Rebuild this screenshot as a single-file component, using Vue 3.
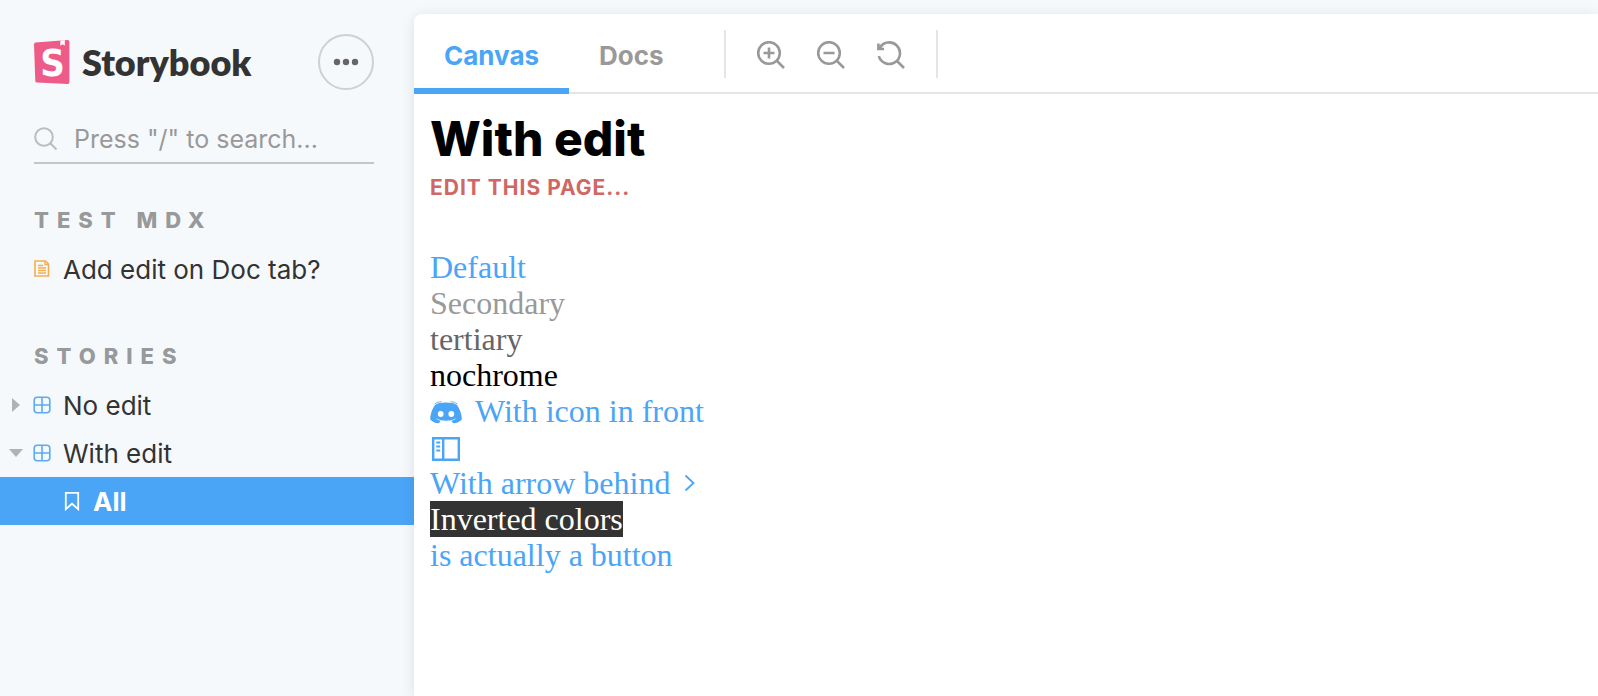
<script setup>
import { ref } from 'vue'

const query = ref('')
const activeTab = ref('Canvas')
const tabs = ['Canvas', 'Docs']
</script>

<template>
  <div class="layout">
    <aside class="sidebar">
      <header class="brand">
        <a class="logo" href="#" aria-label="Storybook">
          <svg class="logo-mark" viewBox="0 0 36 44" aria-hidden="true">
            <path d="M1.6 2.4 33.6 0Q35.4 0 35.4 1.8V42.2Q35.4 44 33.6 43.9L3 42.6Q1.4 42.5 1.3 40.9L0 4.2Q0 2.5 1.6 2.4Z" fill="#ee5b89" />
            <path d="M26.4.6 30.8.2V5.8L28.7 4.2 26.2 5.8Z" fill="#fff" />
            <text class="logo-letter" x="18.5" y="35.5" text-anchor="middle">S</text>
          </svg>
          <span class="logo-text">Storybook</span>
        </a>
        <button class="more" type="button" aria-label="Shortcuts">
          <svg viewBox="0 0 26 8" aria-hidden="true">
            <circle cx="4" cy="4" r="3.2" /><circle cx="13" cy="4" r="3.2" /><circle cx="22" cy="4" r="3.2" />
          </svg>
        </button>
      </header>

      <form class="search" role="search" @submit.prevent>
        <svg viewBox="0 0 24 24" aria-hidden="true">
          <circle cx="10" cy="10" r="8.8" /><path d="m16.3 16.3 6.2 6.2" />
        </svg>
        <input v-model="query" type="text" aria-label="Search" placeholder="Press &quot;/&quot; to search..." />
      </form>

      <nav>
        <section class="group">
          <h2>TEST MDX</h2>
          <a class="row" href="#">
            <span class="caret"></span>
            <svg class="icon doc" viewBox="0 0 18 18" aria-hidden="true">
              <path d="M2 1H12.5L15.5 4V16H2Z" /><path d="M12 1V4.500H15.500M5 5.500H10M5 8H13M5 10.500H13M5 13H13" class="thin" />
            </svg>
            <span>Add edit on Doc tab?</span>
          </a>
        </section>
        <section class="group">
          <h2>STORIES</h2>
          <a class="row" href="#">
            <svg class="caret" viewBox="0 0 16 16" aria-hidden="true"><path d="M4 1 12 8 4 15Z" /></svg>
            <svg class="icon component" viewBox="0 0 18 18" aria-hidden="true">
              <rect x="1.2" y="1.2" width="15.6" height="15.6" rx="3" /><path d="M9 1.2V16.8M1.2 9H16.8" />
            </svg>
            <span>No edit</span>
          </a>
          <a class="row" href="#">
            <svg class="caret" viewBox="0 0 16 16" aria-hidden="true"><path d="M1 4H15L8 12Z" /></svg>
            <svg class="icon component" viewBox="0 0 18 18" aria-hidden="true">
              <rect x="1.2" y="1.2" width="15.6" height="15.6" rx="3" /><path d="M9 1.2V16.8M1.2 9H16.8" />
            </svg>
            <span>With edit</span>
          </a>
          <a class="row selected" href="#" aria-current="page">
            <svg class="icon bookmark" viewBox="0 0 18 20" aria-hidden="true">
              <path d="M2.8 1.8H15.2V18.2L9 12.800 2.8 18.2Z" />
            </svg>
            <span>All</span>
          </a>
        </section>
      </nav>
    </aside>

    <main class="panel">
      <div class="toolbar">
        <button
          v-for="tab in tabs"
          :key="tab"
          type="button"
          class="tab"
          :class="{ active: tab === activeTab }"
          @click="activeTab = tab"
        >{{ tab }}</button>
        <div class="tools">
          <button type="button" aria-label="Zoom in">
            <svg viewBox="0 0 28 28" aria-hidden="true">
              <circle cx="12" cy="12" r="10.8" /><path d="M20 20 27 27M12 6.5V17.5M6.5 12H17.5" />
            </svg>
          </button>
          <button type="button" aria-label="Zoom out">
            <svg viewBox="0 0 28 28" aria-hidden="true">
              <circle cx="12" cy="12" r="10.8" /><path d="M20 20 27 27M6.5 12H17.5" />
            </svg>
          </button>
          <button type="button" aria-label="Reset zoom">
            <svg viewBox="0 0 28 28" aria-hidden="true">
              <path d="M1.8 15.2A10.8 10.8 0 1 0 2.6 7.2M20 20 27 27" /><path d="M1.4 2.5V8H7M1.4 8 5 4.2" />
            </svg>
          </button>
        </div>
      </div>

      <article class="canvas">
        <h1>With edit</h1>
        <a class="edit" href="#">EDIT THIS PAGE...</a>
        <div class="links">
          <a href="#">Default</a>
          <a href="#" class="secondary">Secondary</a>
          <a href="#" class="tertiary">tertiary</a>
          <a href="#" class="nochrome">nochrome</a>
          <a href="#" class="with-icon">
            <svg class="discord" viewBox="0 0 32 24" aria-hidden="true">
              <path d="M5 4Q7 2.200 9.500 1.900Q16 .9 22.500 1.900Q25 2.200 27 4Q31.800 11 31.800 18.500Q28.500 22 23.500 22.300L21.500 19.800Q24.500 19 26.500 17.200Q16 22.200 5.500 17.200Q7.500 19 10.500 19.800L8.500 22.300Q3.500 22 .2 18.500Q.2 11 5 4Z" />
              <path class="lines" d="M4.500 3Q7.500.8 11.500.5M27.500 3Q24.500.8 20.500.5M5.500 18.800Q8 20.600 10.200 21.200M26.500 18.800Q24 20.600 21.800 21.200" />
              <circle cx="10.700" cy="13" r="2.900" class="eye" /><circle cx="21.300" cy="13" r="2.900" class="eye" />
            </svg>
            <span>With icon in front</span>
          </a>
          <a href="#" aria-label="Toggle sidebar">
            <svg class="side" viewBox="0 0 32 32" aria-hidden="true">
              <path d="M3.200 5.200H28.800V26.800H3.200ZM13.200 5.200V26.800" /><path class="ticks" d="M6.200 9.500H10.200M6.200 13.500H10.200M6.200 17.500H10.200" />
            </svg>
          </a>
          <a href="#" class="with-icon behind">
            <span>With arrow behind</span>
            <svg class="arrow" viewBox="0 0 12 18" aria-hidden="true"><path d="M1.500 1.500 9.500 9 1.500 16.500" /></svg>
          </a>
          <a href="#" class="inverted">Inverted colors</a>
          <button type="button">is actually a button</button>
        </div>
      </article>
    </main>
  </div>
</template>

<style>
body {
  margin: 0;
  background: #f6f9fc;
}
</style>

<style scoped>
.layout {
  display: grid;
  grid-template-columns: 414px minmax(0, 1fr);
  min-height: 100vh;
  box-sizing: border-box;
  padding-top: 14px;
  background: #f6f9fc;
  font-family: Inter, "Liberation Sans", sans-serif;
  color: #333;
  overflow: hidden;
}
a {
  color: inherit;
  text-decoration: none;
}
button {
  border: 0;
  padding: 0;
  background: none;
  font: inherit;
  color: inherit;
  cursor: pointer;
}
svg {
  display: block;
  flex: none;
}
.brand {
  display: flex;
  align-items: center;
  justify-content: space-between;
  padding: 20px 40px 0 34px;
}
.logo {
  display: flex;
  align-items: center;
  gap: 12px;
}
.logo-mark {
  width: 36px;
  height: 44px;
}
.logo-letter {
  font: 700 38px "Liberation Sans Narrow", "DejaVu Sans Condensed", sans-serif;
  fill: #fff;
}
.logo-text {
  font: 800 36px/44px Lato, sans-serif;
}
.more {
  display: flex;
  align-items: center;
  justify-content: center;
  box-sizing: border-box;
  width: 56px;
  height: 56px;
  border: 2px solid #ced1d4;
  border-radius: 50%;
}
.more svg {
  width: 26px;
  height: 8px;
  fill: #666;
}
.search {
  display: flex;
  align-items: center;
  gap: 16px;
  box-sizing: border-box;
  height: 50px;
  margin: 24px 40px 0 34px;
  padding-top: 2px;
  border-bottom: 2px solid #c4c7ca;
}
.search svg {
  width: 24px;
  height: 24px;
  fill: none;
  stroke: #bbbdbf;
  stroke-width: 2;
}
.search input {
  flex: 1;
  min-width: 0;
  border: 0;
  padding: 0;
  outline: 0;
  background: none;
  font: 400 25px/32px Inter, sans-serif;
  color: #333;
}
.search input::placeholder {
  color: #999;
  opacity: 1;
}
.group {
  margin: 40px 0 47px;
}
.group h2 {
  margin: 0 0 9px 34px;
  font-size: 22px;
  line-height: 32px;
  font-weight: 800;
  letter-spacing: 8px;
  color: #97999b;
}
.row {
  display: flex;
  align-items: center;
  height: 48px;
  padding-left: 8px;
  font-size: 26px;
}
.caret {
  width: 16px;
  height: 16px;
  margin-right: 9px;
  fill: #b0b2b4;
}
.icon {
  width: 18px;
  height: 18px;
  margin-right: 12px;
  fill: none;
  stroke-width: 1.6;
}
.doc {
  stroke: #f5ae4f;
}
.doc .thin {
  stroke-width: 1.3;
}
.component {
  stroke: #58abf4;
}
.bookmark {
  height: 20px;
  stroke: #fff;
  stroke-width: 1.8;
}
.selected {
  padding-left: 63px;
  background: #4aa5f7;
  color: #fff;
  font-weight: 700;
}
.panel {
  position: relative;
  border-top-left-radius: 8px;
  background: #fff;
  box-shadow: 0 2px 14px rgba(0, 0, 0, 0.1);
}
.toolbar {
  display: flex;
  box-sizing: border-box;
  height: 80px;
  box-shadow: inset 0 -2px #e5e5e5;
}
.tab {
  padding: 8px 30px 0;
  border-bottom: 6px solid transparent;
  font-size: 26px;
  font-weight: 700;
  color: #999;
}
.tab.active {
  border-color: #4aa5f7;
  color: #4aa5f7;
}
.tools {
  display: flex;
  align-items: center;
  gap: 32px;
  box-sizing: border-box;
  height: 48px;
  margin: 16px 0 0 30px;
  padding: 2px 31px 0;
  border: solid #e5e5e5;
  border-width: 0 2px;
}
.tools svg {
  width: 28px;
  height: 28px;
  fill: none;
  stroke: #999;
  stroke-width: 2.6;
}
.canvas {
  padding: 16px;
}
.canvas h1 {
  margin: 0;
  font-size: 48px;
  line-height: 58px;
  font-weight: 800;
  color: #000;
}
.edit {
  display: block;
  font-size: 21px;
  line-height: 40px;
  font-weight: 700;
  letter-spacing: 1px;
  color: #cf6764;
}
.links {
  display: flex;
  flex-direction: column;
  align-items: flex-start;
  margin-top: 41px;
  font: 32px/36px "Liberation Serif", serif;
  color: #4aa5f7;
}
.secondary {
  color: #999;
}
.tertiary {
  color: #666;
}
.nochrome {
  color: #000;
}
.inverted {
  background: #333;
  color: #fff;
}
.with-icon {
  display: flex;
  align-items: center;
  gap: 13px;
}
.behind {
  gap: 14px;
}
.discord {
  width: 32px;
  height: 24px;
  margin-top: 4px;
  fill: #4aa5f7;
}
.discord .lines {
  fill: none;
  stroke: #4aa5f7;
  stroke-width: 0.8;
}
.discord .eye {
  fill: #fff;
}
.side {
  width: 32px;
  height: 32px;
  margin-top: 4px;
  fill: none;
  stroke: #4aa5f7;
  stroke-width: 2.4;
}
.side .ticks {
  stroke-width: 1.8;
}
.arrow {
  width: 12px;
  height: 18px;
  fill: none;
  stroke: #4aa5f7;
  stroke-width: 1.8;
}
</style>
